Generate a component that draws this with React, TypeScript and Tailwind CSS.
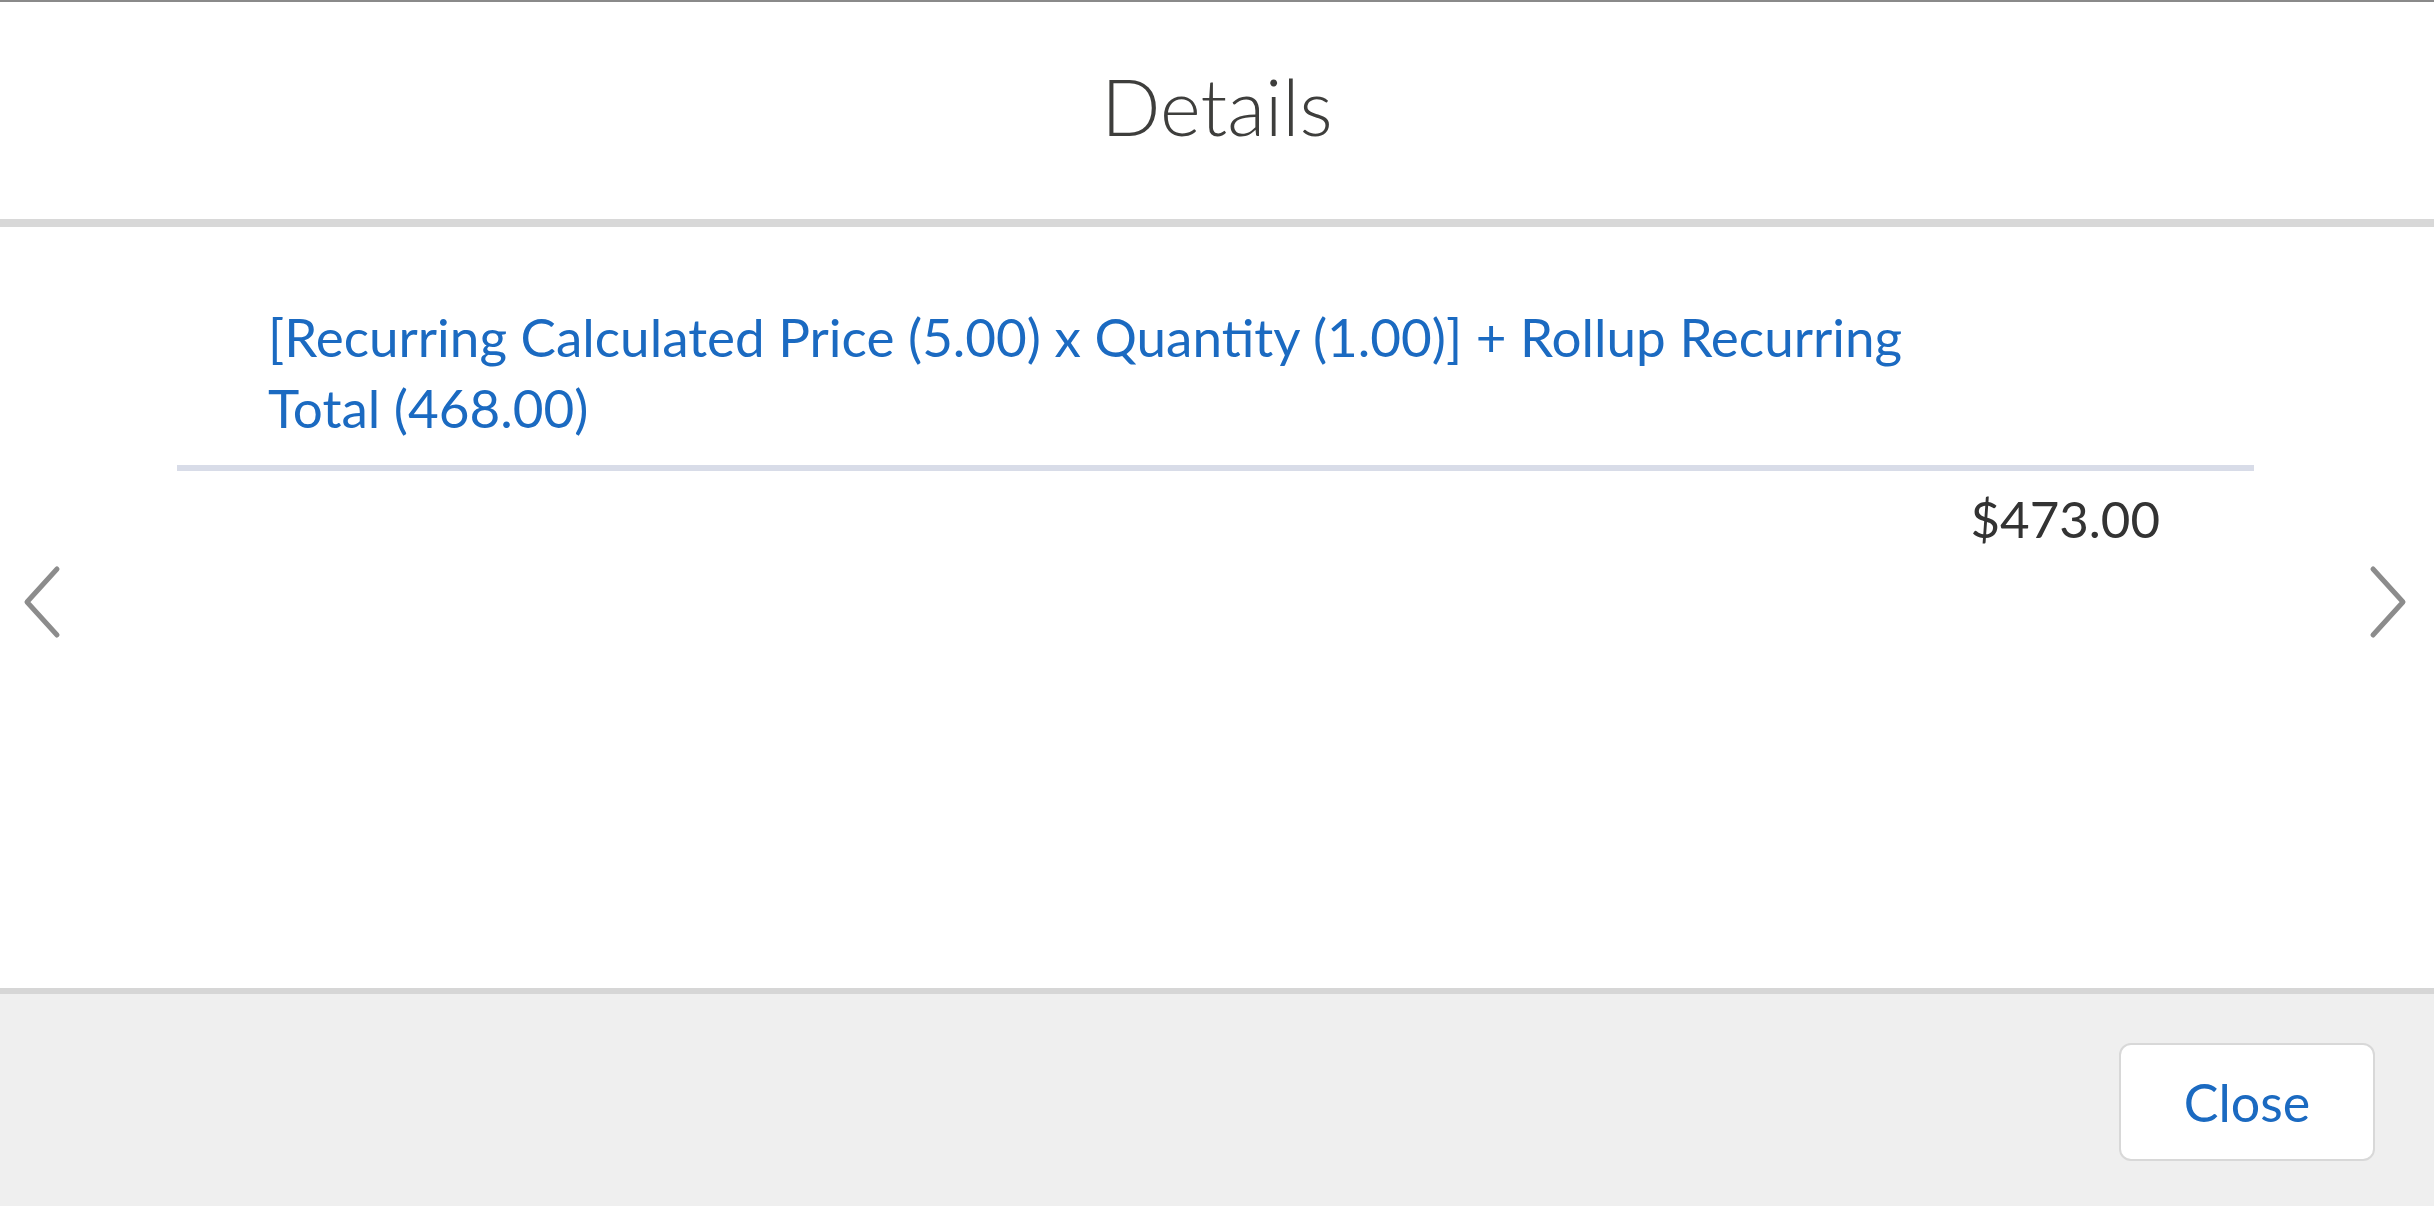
import { ReactNode } from "react";

function Chevron({ dir }: { dir: "left" | "right" }) {
  const d = dir === "left" ? "M35 5 L5 38 L35 71" : "M5 5 L35 38 L5 71";
  return (
    <svg width="40" height="76" viewBox="0 0 40 76" fill="none" className="mb-[11px]">
      <path d={d} stroke="#8c8c8c" strokeWidth="5" strokeLinecap="round" strokeLinejoin="round" />
    </svg>
  );
}

function Row({ label, value }: { label: ReactNode; value: string }) {
  return (
    <div className="flex flex-col">
      <div className="px-[91px]">
        <div className="w-[1700px] text-[53px] leading-[71px] text-[#1b6ac1]">{label}</div>
      </div>
      <div className="mt-[22px] h-[6px] bg-[#d8dce8]" />
      <div className="mt-[18px] pr-[94px] text-right text-[51px] leading-[60px] text-[#333333]">{value}</div>
    </div>
  );
}

export default function App() {
  return (
    <div className="flex h-[1206px] w-[2434px] flex-col bg-white font-['Lato',_'Liberation_Sans',_sans-serif]">
      <div className="box-border h-[227px] border-t-2 border-b-[8px] border-t-[#8a8a8a] border-b-[#d8d8d8] pt-[65px] text-center text-[78px] leading-[78px] font-light text-[#3e3e3c]">
        Details
      </div>

      <div className="flex h-[761px]">
        <div className="flex w-[177px] items-center pl-[22px]">
          <Chevron dir="left" />
        </div>
        <div className="flex-1 pt-[74px]">
          <Row
            label="[Recurring Calculated Price (5.00) x Quantity (1.00)] + Rollup Recurring Total (468.00)"
            value="$473.00"
          />
        </div>
        <div className="flex w-[180px] items-center justify-end pr-[26px]">
          <Chevron dir="right" />
        </div>
      </div>

      <div className="flex flex-1 items-start justify-end border-t-[6px] border-[#d6d6d6] bg-[#efefef] pt-[49px] pr-[59px]">
        <button className="h-[118px] w-[256px] rounded-[12px] border-2 border-[#d8d8d8] bg-white text-[52px] leading-none text-[#1b6ac1]">
          Close
        </button>
      </div>
    </div>
  );
}
